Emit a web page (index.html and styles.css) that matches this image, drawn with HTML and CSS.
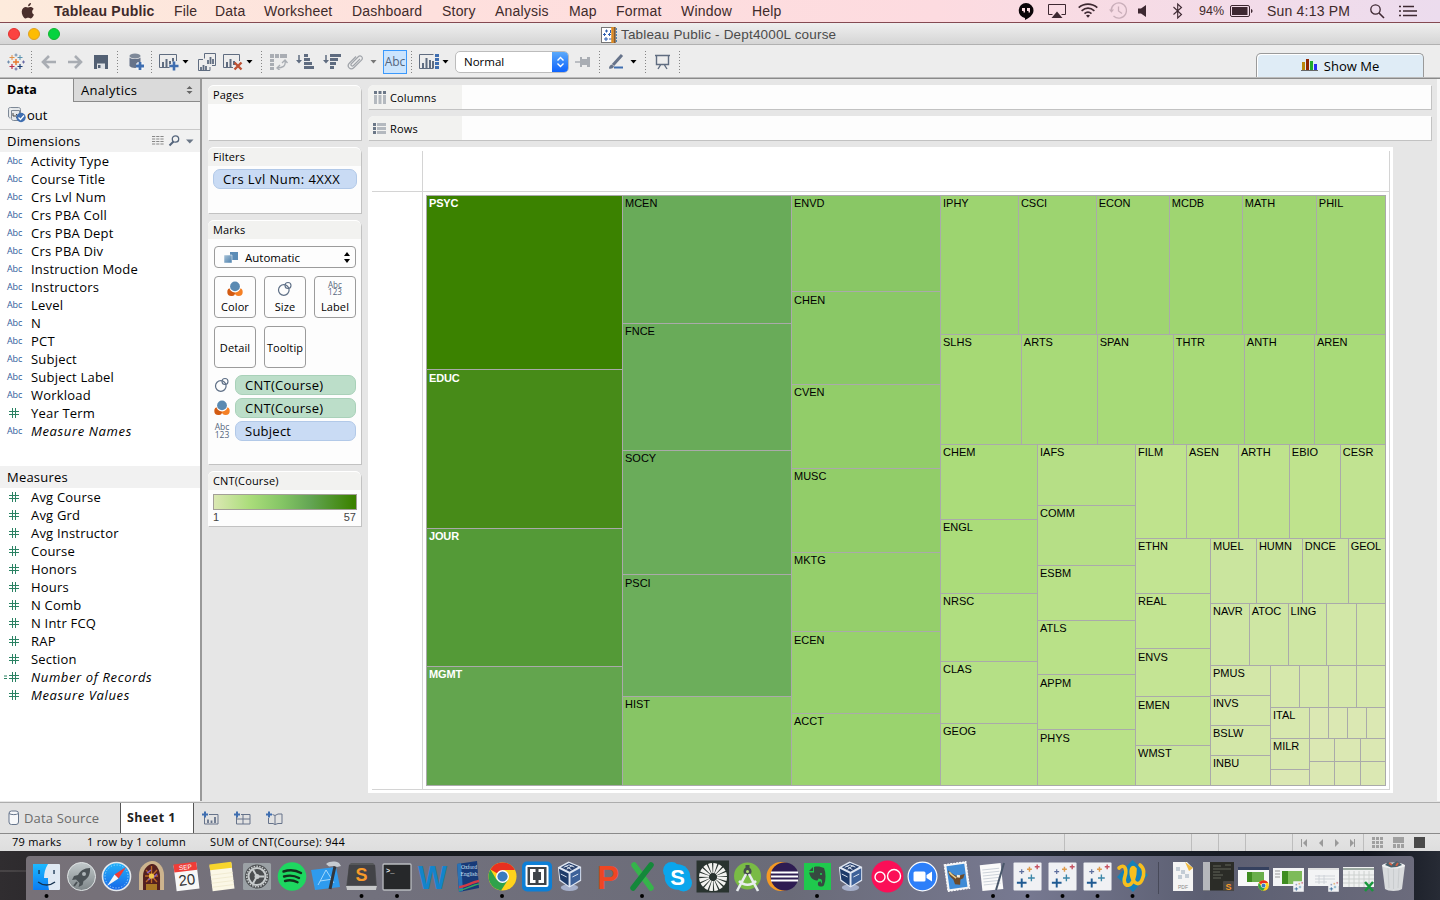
FILE: index.html
```html
<!DOCTYPE html>
<html lang="en">
<head>
<meta charset="utf-8">
<title>Tableau Public - Dept4000L course</title>
<link rel="stylesheet" href="styles.css">
</head>
<body>
<svg class="defs" width="0" height="0" aria-hidden="true">
  <defs>
    <linearGradient id="gBlue" x1="0" y1="0" x2="0" y2="1"><stop offset="0" stop-color="#23b3fa"/><stop offset="1" stop-color="#1765e8"/></linearGradient>
    <linearGradient id="gFinder" x1="0" y1="0" x2="0" y2="1"><stop offset="0" stop-color="#1cb9ff"/><stop offset="1" stop-color="#0a7cf2"/></linearGradient>
    <linearGradient id="gSilver" x1="0" y1="0" x2="0" y2="1"><stop offset="0" stop-color="#c3cacc"/><stop offset="1" stop-color="#7d8588"/></linearGradient>
    <linearGradient id="gTile" x1="0" y1="0" x2="1" y2="1"><stop offset="0" stop-color="#a9c3d8"/><stop offset="1" stop-color="#4a7fac"/></linearGradient>
    <symbol id="abc123" viewBox="0 0 16 18"><text x="8" y="8" class="abc-t" text-anchor="middle">Abc</text><text x="8" y="16" class="abc-t" text-anchor="middle">123</text></symbol>
    <symbol id="color" viewBox="0 0 16 16"><path d="M1 8.500c-.8 5 3.500 7 6.800 5.500C5 13.500 3 11.500 3 8.500z" fill="#cf560f"/><circle cx="4.300" cy="11" r="4" fill="#d35b12"/><circle cx="11.700" cy="11" r="4" fill="#f58025"/><circle cx="8" cy="5.600" r="5.800" fill="#fff"/><circle cx="8" cy="5.400" r="4.900" fill="#5a8ab2"/></symbol>
    <symbol id="size" viewBox="0 0 16 16"><circle cx="6.800" cy="9" r="5.300" fill="none" stroke="#5e6f86" stroke-width="1.200"/><circle cx="11" cy="4.500" r="3" fill="none" stroke="#5e6f86" stroke-width="1.100"/></symbol>
    <symbol id="hash" viewBox="0 0 12 12"><path d="M4.500 1v10M7.500 1v10M1 4.500h10M1 7.500h10" stroke="#2a8263" stroke-width="1" fill="none"/></symbol>
    <symbol id="caret" viewBox="0 0 7 4"><path d="M.5 0h6L3.500 3.500z"/></symbol>
    <symbol id="chrome" viewBox="0 0 30 30"><circle cx="15" cy="15" r="14.500" fill="#ffd21c"/><path d="M15 15L2.500 7.700A14.500 14.500 0 0 1 27.800 8.300L15 8.300z" fill="#e8301f"/><path d="M2.500 7.700A14.500 14.500 0 0 0 13.500 29.400L20.500 18.500 15 15 8.700 18z" fill="#2fa24b"/><circle cx="15" cy="15" r="6.700" fill="#fff"/><circle cx="15" cy="15" r="5.300" fill="#3b7bc0"/></symbol>
    <symbol id="vbox" viewBox="0 0 30 32"><ellipse cx="15" cy="28" rx="9" ry="3.500" fill="#a6b0ca"/><path d="M3 7L14 1l13 5.500v14.500L15 28 4.500 21z" fill="#dfe6f2"/><path d="M4 8.500l10 5v12.500L5.500 20z" fill="#1d3a69"/><path d="M16 13.500L26 8v12L16 26z" fill="#3d6199"/><path d="M6 7l8.500-4.500L24 6.500 15 11.500z" fill="#28406c"/><path d="M9 7l5.500-2.500L20 6.800M12 9l6-4M11 5.500l6 4M6 14l6 3M18 17l6-3" stroke="#dfe6f2" fill="none"/></symbol>
    <symbol id="tabl" viewBox="0 0 30 30"><rect x=".5" y=".5" width="29" height="29" rx="1" fill="#f0f1f4"/><path d="M4 21.500h10M9 17v9.500" stroke="#1f5a92" stroke-width="2"/><path d="M15.500 16.500h7M19 13v7" stroke="#3b87a8" stroke-width="1.400"/><path d="M6.500 10h5M9 7.500v5" stroke="#5c6d9c" stroke-width="1.200"/><path d="M14.500 7.500h5M17 5v5" stroke="#df9b4c" stroke-width="1.500"/><path d="M22.500 5h5M25 2.500v5" stroke="#c65464" stroke-width="1.500"/></symbol>
  </defs>
</svg>

<header class="menubar">
  <svg width="14" height="22"><path d="M9.200 3.200c.7-.8.800-1.600.8-2.200-1.600.1-3.100 1.500-2.900 3.200.9 0 1.600-.4 2.100-1zM7 5.600C5.500 5 3.800 4.800 2.300 6 .300 7.600.4 11 1.600 13.500c.7 1.500 1.700 2.900 3 2.900.9 0 1.300-.6 2.500-.6s1.600.6 2.600.6c1.500 0 2.700-2 3.300-3.800-2.300-1.200-2.400-4.400-.3-5.700C11.400 5 9.400 4.700 8.200 5.300z" transform="translate(0 2)" fill="#4a2f2c"/></svg>
  <b>Tableau Public</b><span>File</span><span>Data</span><span>Worksheet</span><span>Dashboard</span><span>Story</span><span>Analysis</span><span>Map</span><span>Format</span><span>Window</span><span>Help</span>
  <svg width="16" height="22"><path d="M8 3a7.500 7.500 0 0 0-1 14.900V20c3.500-1.500 8.500-5 8.500-9.500A7.500 7.500 0 0 0 8 3z" fill="#0b0508"/><path d="M4 8h3v4.500H5.500V11H4zM9 8h3v4.500h-1.500V11H9z" fill="#fbdbe0"/></svg>
  <svg width="18" height="22"><path d="M4.500 14.500h-4V4.500h17v10h-4" fill="none" stroke="#3d2831"/><path d="M9 11.500l5.500 6.500h-11z" fill="#3d2831"/></svg>
  <svg width="20" height="22"><g fill="none" stroke="#3d2831" stroke-width="1.700"><path d="M.700 7.600c5.500-4.700 13-4.700 18.600 0M3.600 10.800c4-3.400 8.800-3.400 12.800 0M6.500 13.600c2.200-1.900 4.800-1.900 7 0"/></g><path d="M8 15.500c1.300-.9 2.700-.9 4 0l-2 2.300z" fill="#3d2831"/></svg>
  <svg width="18" height="22"><g fill="none" stroke="#c9aeb9" stroke-width="1.300"><path d="M2.200 10.500a7.600 7.600 0 1 1 2.300 5.500M9.500 6.500v4.500l3.500 2.500"/></g><path d="M0 9.500h5l-2.500 3.200z" fill="#c9aeb9"/></svg>
  <svg width="10" height="22"><path d="M0 8.500h3L8 5v12l-5-3.500H0z" fill="#3d2831"/></svg>
  <svg width="10" height="22"><path d="M.5 7l8 7.500L4.700 18V4l3.800 3.500-8 7" fill="none" stroke="#3d2831" stroke-width="1.100"/></svg>
  <span class="pct">94%</span>
  <svg width="23" height="22"><rect x=".5" y="5.500" width="19" height="11" rx="1.500" fill="none" stroke="#3d2831"/><path d="M2 7h15.500v8H2z" fill="#3d2831"/><path d="M21 9c2 .5 2 3.500 0 4z" fill="#3d2831"/></svg>
  <span class="clock">Sun 4:13 PM</span>
  <svg width="15" height="22"><circle cx="5.500" cy="9.500" r="4.700" fill="none" stroke="#3d2831" stroke-width="1.300"/><path d="M9 13l5 5" stroke="#3d2831" stroke-width="1.600"/></svg>
  <svg width="18" height="22"><path d="M0 6.500h2M0 11h2M0 15.500h2M4 6.500h11M4 11h14M4 15.500h14" stroke="#3d2831" stroke-width="1.600"/></svg>
</header>

<div class="titlebar">
  <div class="lights"><i class="red"></i><i class="yellow"></i><i class="green"></i></div>
  <div class="title"><svg width="16" height="16"><rect x=".5" y=".5" width="11" height="15" fill="#fff" stroke="#777"/><path d="M4 4h3M5.500 2.500v3M2 7.500h3M3.500 6v3M7 7.500h3M8.500 6v3M3 12h4M5 10v4M8 12h3M9.500 3v3" stroke="#2f5fb0"/><path d="M11.500 0v16" stroke="#e08a1c" stroke-width="2.500"/><path d="M13.700 0v16" stroke="#8a5a2a" stroke-width="2"/><path d="M15.300 1v15" stroke="#2f6fa8" stroke-dasharray="2 1"/></svg><span>Tableau Public - Dept4000L course</span></div>
</div>

<div class="toolbar">
  <svg width="18" height="18"><path d="M6 9h6M9 6v6" stroke="#e8762b" stroke-width="1.400"/><path d="M2.500 4.500h5M5 2v5" stroke="#e09049"/><path d="M10.500 4.500h5M13 2v5" stroke="#5a93b0"/><path d="M2.500 13.500h5M5 11v5" stroke="#bf2f4b" stroke-width="1.200"/><path d="M10.500 13.500h5M13 11v5" stroke="#1f3f75" stroke-width="1.200"/><path d="M7.500 2h3M9 .5v3M0 9h3M1.500 7.500v3" stroke="#6f8cad"/><path d="M15 9h3M16.500 7.500v3M7.500 16h3M9 14.500v3" stroke="#6a6aa5"/></svg>
  <i class="sep"></i>
  <svg width="16" height="16"><path d="M15 8H2M8 2L2 8l6 6" fill="none" stroke="#a9adb3" stroke-width="2.600"/></svg>
  <svg width="16" height="16"><path d="M1 8h13M8 2l6 6-6 6" fill="none" stroke="#a9adb3" stroke-width="2.600"/></svg>
  <svg width="14" height="14"><path d="M0 0h14v14H0z" fill="#536073"/><path d="M3 8.500h8V14H3z" fill="#dfe2e6"/><path d="M4 10h2.500v3H4z" fill="#536073"/></svg>
  <i class="sep"></i>
  <svg width="15" height="18"><ellipse cx="6" cy="3" rx="5.500" ry="2.500" fill="#7e8999"/><path d="M.5 4.500c2 2 9 2 11 0V13c-2 2.500-9 2.500-11 0z" fill="#66738a"/><path d="M7 13h8M11 9v8" stroke="#fff" stroke-width="5"/><path d="M7 13h8M11 9v8" stroke="#3f6eb0" stroke-width="2.800"/></svg>
  <i class="sep"></i>
  <svg width="21" height="18"><path d="M17.500 8V1.500H.5v13H12" fill="none" stroke="#5f6c80"/><path d="M4 14V9M7.500 14V6M11 14V8M14 10V5" stroke="#5f6c80" stroke-width="2"/><path d="M10.500 13h9M15 8.500v9" stroke="#ededed" stroke-width="4"/><path d="M10.500 13h9M15 8.500v9" stroke="#3f6eb0" stroke-width="2.600"/></svg>
  <svg class="caret" width="7" height="4"><use href="#caret"/></svg>
  <svg width="18" height="18"><path d="M6.500.5h11v12H14M6.500.5v5" fill="none" stroke="#5f6c80"/><path d="M10 11V7M12.500 11V4M15 11V6M3 17v-3M5.500 17v-5M8 17v-4" stroke="#5f6c80" stroke-width="1.800"/><path d="M5 6.500H.5v11h11.500V14" fill="none" stroke="#5f6c80"/></svg>
  <svg width="20" height="18"><path d="M16.500 8V1.500H.5v13H10" fill="none" stroke="#5f6c80"/><path d="M4 14V9M7.500 14V6M11 12V8" stroke="#5f6c80" stroke-width="2"/><path d="M11.500 9.500l7 7M18.500 9.500l-7 7" stroke="#bd5134" stroke-width="2.400"/></svg>
  <svg class="caret" width="7" height="4"><use href="#caret"/></svg>
  <i class="sep"></i>
  <svg width="18" height="16"><g fill="#a9adb3"><path d="M0 0h4v4H0zM5 0h4v4H5zM10 0h7v4h-7zM0 5h4v3H0zM0 9h4v3H0zM0 13h4v3H0z"/></g><path d="M7 14c6 0 9-2 8-7M10 11l-3 3 3 2.500M12 9l3-3 2.500 3" fill="none" stroke="#a9adb3" stroke-width="1.300"/></svg>
  <svg width="19" height="16"><path d="M3 1v7" stroke="#5f6c80" stroke-width="1.500"/><path d="M0 6h6L3 9.500z" fill="#5f6c80"/><path d="M8 0h4v3H8zM8 4h6v3H8zM8 8h8v3H8zM8 12h10v3H8z" fill="#5f6c80"/></svg>
  <svg width="19" height="16"><path d="M3 1v7" stroke="#5f6c80" stroke-width="1.500"/><path d="M0 6h6L3 9.500z" fill="#5f6c80"/><path d="M7 0h11v3H7zM7 4h8v3H7zM7 8h6v3H7zM7 12h4v3H7z" fill="#5f6c80"/></svg>
  <svg width="17" height="16"><path d="M13 5L6.500 11.500c-1.500 1.500-3.500-.5-2-2L11 3c2.500-2.500 6 .5 3.500 3.200L7 13.500c-3.500 3.500-8-1-4.500-4.500L9 2.500" fill="none" stroke="#a0a4aa" stroke-width="1.200"/></svg>
  <svg class="caret dim" width="7" height="4"><use href="#caret"/></svg>
  <span class="abc-btn">Abc</span>
  <i class="sep"></i>
  <svg width="21" height="15"><path d="M14.500 14.500H.5V.5h14" fill="none" stroke="#5f6c80"/><path d="M4 14V9M7.500 14V4M11 14V6M14 14V7" stroke="#5f6c80" stroke-width="2"/><path d="M16 0h4v3h-4zM16 4h4v3h-4zM16 8h4v3h-4zM16 12h4v3h-4z" fill="#3f6eb0"/></svg>
  <svg class="caret" width="7" height="4"><use href="#caret"/></svg>
  <div class="select"><span>Normal</span><i><svg width="9" height="12"><path d="M1.500 4.500l3-3 3 3M1.500 7.500l3 3 3-3" fill="none" stroke="#fff" stroke-width="1.400"/></svg></i></div>
  <svg width="16" height="12"><path d="M0 6h6" stroke="#a9adb3" stroke-width="1.500"/><path d="M5 1h2v2h5V1h3v10h-3V9H7v2H5z" fill="#a9adb3"/></svg>
  <i class="sep"></i>
  <svg width="16" height="16"><path d="M13 1L4 11" stroke="#66738a" stroke-width="3"/><path d="M0 14.500c0-2 1-3.500 3-4l2 2c-1 2-3 2.500-5 2z" fill="#66738a"/><path d="M5 13.500h9" stroke="#3f6eb0" stroke-width="2"/></svg>
  <svg class="caret" width="7" height="4"><use href="#caret"/></svg>
  <i class="sep"></i>
  <svg width="16" height="16"><path d="M0 1.500h15M1.500 2v8.500h12V2M5.500 11L3 15M9.500 11l2.500 4" fill="none" stroke="#5f6c80" stroke-width="1.400"/></svg>
  <i class="sep"></i>
  <div class="showme"><svg width="17" height="13"><path d="M1 3h3v8H1z" fill="#b8860b"/><path d="M5 0h3v11H5z" fill="#8f2500"/><path d="M9 2h3v9H9z" fill="#1fa82c"/><path d="M13 5h3v6h-3z" fill="#2a2af0"/><path d="M0 11.500h17" stroke="#666"/></svg><span>Show Me</span></div>
</div>

<main class="main">
  <aside class="side">
    <div class="tabs"><b>Data</b><span>Analytics<svg width="7" height="8"><path d="M3.500 0L6.500 3h-6zM3.500 8L6.500 5h-6z" fill="#666"/></svg></span></div>
    <div class="source"><svg width="18" height="16"><path d="M2.500.5h8c2 0 2 2 2 2v8M2.500.5c-2 0-2 1-2 2V9c0 2 2 2 2 2M3.500 3.500h8v10h-6c-2 0-2-2-2-2z" fill="#e4e7ea" stroke="#7d8896"/><path d="M5 6v3h5M8 7l2 2-2 2" fill="none" stroke="#444"/><circle cx="13" cy="10.500" r="4.700" fill="#3f6eb0"/><path d="M10.500 10.500l2 2 3.500-4" fill="none" stroke="#fff" stroke-width="1.300"/></svg><span>out</span></div>
    <div class="head"><span>Dimensions</span><svg width="42" height="12"><path d="M0 1.500h12M0 4h12M0 6.500h12M0 9h12" stroke="#888" stroke-dasharray="3.200 1"/><circle cx="23.500" cy="4" r="3.200" fill="none" stroke="#55657c" stroke-width="1.300"/><path d="M21.500 6.500L17.500 10.500" stroke="#55657c" stroke-width="1.900"/><path d="M34 4.500h7.500L37.800 8.500z" fill="#6b7787"/></svg></div>
    <ul class="fields dims">
      <li><i>Abc</i>Activity Type</li><li><i>Abc</i>Course Title</li><li><i>Abc</i>Crs Lvl Num</li><li><i>Abc</i>Crs PBA Coll</li><li><i>Abc</i>Crs PBA Dept</li><li><i>Abc</i>Crs PBA Div</li><li><i>Abc</i>Instruction Mode</li><li><i>Abc</i>Instructors</li><li><i>Abc</i>Level</li><li><i>Abc</i>N</li><li><i>Abc</i>PCT</li><li><i>Abc</i>Subject</li><li><i>Abc</i>Subject Label</li><li><i>Abc</i>Workload</li>
      <li><svg width="12" height="12"><use href="#hash"/></svg>Year Term</li><li class="it"><i>Abc</i>Measure Names</li>
    </ul>
    <div class="head"><span>Measures</span></div>
    <ul class="fields">
      <li><svg width="12" height="12"><use href="#hash"/></svg>Avg Course</li><li><svg width="12" height="12"><use href="#hash"/></svg>Avg Grd</li><li><svg width="12" height="12"><use href="#hash"/></svg>Avg Instructor</li><li><svg width="12" height="12"><use href="#hash"/></svg>Course</li><li><svg width="12" height="12"><use href="#hash"/></svg>Honors</li><li><svg width="12" height="12"><use href="#hash"/></svg>Hours</li><li><svg width="12" height="12"><use href="#hash"/></svg>N Comb</li><li><svg width="12" height="12"><use href="#hash"/></svg>N Intr FCQ</li><li><svg width="12" height="12"><use href="#hash"/></svg>RAP</li><li><svg width="12" height="12"><use href="#hash"/></svg>Section</li>
      <li class="it calc"><svg width="16" height="12"><path d="M0 5h3M0 7.500h3" stroke="#2a8263"/><use href="#hash" x="4" width="12" height="12"/></svg>Number of Records</li><li class="it"><svg width="12" height="12"><use href="#hash"/></svg>Measure Values</li>
    </ul>
  </aside>

  <section class="cards">
    <div class="card pages"><h3>Pages</h3></div>
    <div class="card filters"><h3>Filters</h3><div class="pill blue">Crs Lvl Num: 4XXX</div></div>
    <div class="card marks"><h3>Marks</h3>
      <div class="marktype"><svg width="14" height="11"><path d="M6 0h8v8H6z" fill="#5c8cb6"/><path d="M0 3h8v8H0z" fill="url(#gTile)" stroke="#fff" stroke-width=".5"/></svg><span>Automatic</span><svg width="6" height="11"><path d="M3 0l3 4H0zM3 11l3-4H0z"/></svg></div>
      <div class="btns">
        <div><svg width="16" height="16"><use href="#color"/></svg>Color</div><div><svg width="16" height="16"><use href="#size"/></svg>Size</div><div><svg width="18" height="17"><use href="#abc123"/></svg>Label</div><div>Detail</div><div>Tooltip</div>
      </div>
      <div class="shelfrow"><svg width="16" height="16"><use href="#size"/></svg><div class="pill green">CNT(Course)</div></div>
      <div class="shelfrow"><svg width="16" height="16"><use href="#color"/></svg><div class="pill green">CNT(Course)</div></div>
      <div class="shelfrow"><svg width="16" height="18"><use href="#abc123"/></svg><div class="pill blue">Subject</div></div>
    </div>
    <div class="card legend"><h3>CNT(Course)</h3><div class="ramp"></div><div class="ends"><span>1</span><span>57</span></div></div>
  </section>

  <section class="canvas">
    <div class="shelf"><div><svg width="12" height="13"><g fill="#6b7787"><path d="M0 0h3v3H0zM4.500 0h3v3h-3zM9 0h3v3H9z"/></g><g fill="#b4b9bf"><path d="M0 4h3v9H0zM4.500 4h3v9h-3zM9 4h3v9H9z"/></g></svg>Columns</div></div>
    <div class="shelf rows"><div><svg width="13" height="11"><g fill="#6b7787"><path d="M0 0h3v3H0zM0 4h3v3H0zM0 8h3v3H0z"/></g><g fill="#b4b9bf"><path d="M4 0h9v3H4zM4 4h9v3H4zM4 8h9v3H4z"/></g></svg>Rows</div></div>
    <div class="view"><div class="grid"><div class="corner"></div><div class="top"></div><div class="rowhead"></div><div class="pane"><div class="treemap" id="treemap"></div></div></div></div>
  </section>
</main>

<nav class="sheets">
  <div class="ds"><svg width="12" height="16"><rect x="1" y="1" width="9.500" height="13.500" rx="2.500" fill="#f7f8fa" stroke="#66758c"/><path d="M1 3.500c2 1.500 7.500 1.500 9.500 0" fill="none" stroke="#66758c"/></svg>Data Source</div>
  <div class="sheet">Sheet 1</div>
  <svg width="17" height="14"><path d="M7 3.500h9v9.500H2.500V6" fill="none" stroke="#66738a"/><path d="M6 12V8.500M9.500 12V9.500M13 12V6" stroke="#66738a" stroke-width="1.800"/><path d="M0 3.500h6M3 .5v6" stroke="#3f6eb0" stroke-width="2"/></svg>
  <svg width="17" height="14"><path d="M7 3.500h9v9.500H2.500V6M2.500 8h13.500M9 3.500v9.500" fill="none" stroke="#66738a"/><path d="M0 3.500h6M3 .5v6" stroke="#3f6eb0" stroke-width="2"/></svg>
  <svg width="17" height="14"><path d="M9 4.500l3-1.500h4v9.500h-4l-3 1zM9 13.500l-2-1H2.500V7M6.500 3.500l2.500 1" fill="none" stroke="#66738a"/><path d="M0 3.500h6M3 .5v6" stroke="#3f6eb0" stroke-width="2"/></svg>
</nav>
<footer class="status">
  <span>79 marks</span><span>1 row by 1 column</span><span>SUM of CNT(Course): 944</span>
  <i></i><i></i><i></i><i></i>
  <div class="nav"><svg width="55" height="10"><g fill="#9a9a9a"><path d="M0 1h1v8H0zM6 1v8L2 5zM22 1v8l-4-4zM34 1v8l4-4zM49 1v8l4-4zM53 1h1v8h-1z"/></g></svg></div>
  <div class="modes"><svg width="54" height="12"><g fill="#a0a0a0"><path d="M0 0h3v3H0zM4 0h3v3H4zM8 0h3v3H8zM0 4h3v3H0zM4 4h3v3H4zM8 4h3v3H8zM0 8h3v3H0zM4 8h3v3H4zM8 8h3v3H8zM21 0h11v6H21zM21 7h3v4h-3zM25 7h3v4h-3zM29 7h3v4h-3z"/></g><path d="M42 0h11v11H42z" fill="#4a4a4a"/></svg></div>
</footer>

<div class="desk"><div class="dock">
  <svg viewBox="0 0 35 44"><rect x="4" y="8" width="27" height="26" rx="1" fill="#dfe9f3"/><path d="M4 8h15c-3 5-4 9-4 14h4c0 4 0 8 1 12H4z" fill="url(#gFinder)"/><path d="M10 14v4M25 14v4M9 26c5 4 12 4 17 0" stroke="#14324f" stroke-width="1.300" fill="none"/><circle cx="17.500" cy="40" r="2"/></svg>
  <svg viewBox="0 0 35 44"><circle cx="17.500" cy="20.500" r="14" fill="url(#gSilver)" stroke="#dfe3e4"/><path d="M26 12c-6 0-10 3-12 7l-4 1-2 4 4-.5 3.500 3.500-1 4 4-2 1-4c4-2 7-6 6.500-13z" fill="#4b5256"/><circle cx="20" cy="18" r="2" fill="#aeb5b8"/><path d="M10 30l3-4" stroke="#4b5256" stroke-width="2"/></svg>
  <svg viewBox="0 0 35 44"><circle cx="17.500" cy="20.500" r="14" fill="url(#gBlue)" stroke="#e4e8ec" stroke-width="1.600"/><circle cx="17.500" cy="20.500" r="11.500" fill="none" stroke="#b9e2fb" stroke-dasharray="1 2"/><path d="M27 11L15.500 18.500l4 4z" fill="#f23c36"/><path d="M8 30l7.500-11.500 4 4z" fill="#f5f5f5"/></svg>
  <svg viewBox="0 0 35 44"><path d="M5 34V19C5 11 11 6 17.500 5S30 11 30 19v15z" fill="#cdb48e"/><path d="M9 34V20c0-6 4-11 8.500-12S26 14 26 20v14z" fill="#54201f"/><path d="M17.500 10v17M12 14l11 12M23 14L12 26M11 20h13" stroke="#c06a26" stroke-width="1.300"/><path d="M13 17l4-3M19 22l4-4M14 24l3-2" stroke="#8a5fc0" stroke-width="1.500"/><circle cx="17.500" cy="20" r="2.600" fill="#f0c64b"/><path d="M12 28h11v6H12z" fill="#a97825"/></svg>
  <svg viewBox="0 0 35 44"><g transform="rotate(-7 17.500 21)"><path d="M6 8h23v26H6z" fill="#f7f7f7"/><path d="M6 7h23v8H6z" fill="#ef3d38"/><text x="17.500" y="13.500" text-anchor="middle" class="cal-m">SEP</text><text x="17.500" y="29" text-anchor="middle" class="cal-d">20</text></g></svg>
  <svg viewBox="0 0 35 44"><g transform="rotate(-7 17.500 21)"><path d="M7 8h22v26H7z" fill="#fbf7e6"/><path d="M7 7h22v6H7z" fill="#f7d52c"/><path d="M7 18h22M7 22h22M7 26h22M7 30h22" stroke="#f1ebd2"/></g></svg>
  <svg viewBox="0 0 35 44"><rect x="4" y="7" width="28" height="27" rx="1.500" fill="#9ba1a5"/><circle cx="18" cy="20.500" r="12" fill="#4b4e50"/><circle cx="18" cy="20.500" r="8.500" fill="none" stroke="#c8cccd" stroke-width="2"/><circle cx="18" cy="20.500" r="10.300" fill="none" stroke="#c8cccd" stroke-width="1.500" stroke-dasharray="1.500 1.300"/><path d="M18 20.500h7.500M18 20.500l-4 6.700M18 20.500l-4-6.700" stroke="#c8cccd" stroke-width="2"/><circle cx="18" cy="20.500" r="2.500" fill="#c8cccd"/></svg>
  <svg viewBox="0 0 35 44"><circle cx="18" cy="20.500" r="14.300" fill="#1ed760"/><path d="M9.500 15.500c6-2 12.500-1.400 17.500 1.500M10 20.500c5-1.500 10.500-1 15 1.500M11 25c4-1.200 8.500-.8 12.500 1.300" fill="none" stroke="#12301c" stroke-width="2.400" stroke-linecap="round"/></svg>
  <svg viewBox="0 0 35 44"><path d="M2 14l25-3 4 20-25 3z" fill="#2e9bee"/><path d="M9 29l8-15 8 13M11 25l13-2" fill="none" stroke="#a4d8fb"/><path d="M26 10l-5 23" stroke="#32363b" stroke-width="3"/><path d="M17 8c4-3 9-3 13-1l2 3-4 1-3-1-5 .5z" fill="#c7ccd1"/></svg>
  <svg viewBox="0 0 35 44"><path d="M5 9l2-2h22l2 2 2 22-1 3H3l-1-3z" fill="#55575a"/><path d="M5 9h26l1 20H3z" fill="#424347"/><path d="M2 30h31l-1 4H3z" fill="#c7c9ca"/><text x="17.500" y="25" text-anchor="middle" class="subl">S</text><circle cx="17.500" cy="40" r="2"/></svg>
  <svg viewBox="0 0 35 44"><rect x="4" y="8" width="28" height="26" rx="1" fill="#26282a" stroke="#b9bcc0" stroke-width="1.300"/><text x="7" y="17" class="term">&gt;_</text><circle cx="18" cy="40" r="2"/></svg>
  <svg viewBox="0 0 35 44"><text x="17.500" y="33" text-anchor="middle" class="office w" textLength="29" lengthAdjust="spacingAndGlyphs">W</text></svg>
  <svg viewBox="0 0 35 44"><path d="M7 8l20-3 2 27-20 4z" fill="#173a78"/><path d="M7 8l4-1 2 28-4 1z" fill="#2b73b5"/><path d="M9 31c6 0 13-5 20-6" stroke="#d33b45" stroke-width="2.500" fill="none"/><path d="M9 34c6 0 13-5 20-6" stroke="#35a760" stroke-width="1.500" fill="none"/><text x="19" y="13" text-anchor="middle" class="dict">Oxford</text><text x="19" y="20" text-anchor="middle" class="dict">English</text></svg>
  <svg viewBox="0 0 35 44"><use href="#chrome" x="3" y="6" width="29" height="29"/><circle cx="17" cy="40" r="2"/></svg>
  <svg viewBox="0 0 35 44"><rect x="2" y="5.500" width="30" height="30" rx="5" fill="#0d7fd6"/><rect x="5.500" y="9" width="23" height="22" rx="2" fill="#fff"/><path d="M7.500 11h19v18h-19z" fill="#3e4348"/><path d="M15.500 14.500h-4v11h4M18.500 14.500h4v11h-4" fill="none" stroke="#fff" stroke-width="3"/></svg>
  <svg viewBox="0 0 35 44"><use href="#vbox" x="0" y="4" width="29" height="32"/></svg>
  <svg viewBox="0 0 35 44"><text x="18" y="33" text-anchor="middle" class="office p">P</text></svg>
  <svg viewBox="0 0 35 44"><path d="M9 9l17 23" stroke="#36b44b" stroke-width="5.500" stroke-linecap="round"/><path d="M26 9L8 32" stroke="#14883a" stroke-width="5.500" stroke-linecap="round"/><circle cx="17" cy="40" r="2"/></svg>
  <svg viewBox="0 0 35 44"><circle cx="17.500" cy="21" r="12.800" fill="#0aa6ec"/><circle cx="11.500" cy="14.500" r="8.500" fill="#0aa6ec"/><circle cx="23.500" cy="27" r="8.500" fill="#0aa6ec"/><text x="17.500" y="28.500" text-anchor="middle" class="skype">S</text></svg>
  <svg viewBox="0 0 35 44"><path d="M1.500 4.500h32.500v32H1.500z" fill="#29332f"/><circle cx="18" cy="21" r="9" fill="none" stroke="#f3f3f0" stroke-width="10" stroke-dasharray="2.600 .93"/><circle cx="18" cy="21" r="3.300" fill="#29332f"/></svg>
  <svg viewBox="0 0 35 44"><circle cx="17.500" cy="20" r="13.500" fill="#79bb45"/><path d="M17.500 9v6" stroke="#454d4d" stroke-width="4"/><circle cx="17.500" cy="15.500" r="4" fill="#454d4d"/><circle cx="17.500" cy="15.500" r="1.500" fill="#aee071"/><path d="M16 18L7 35M19 18l9 17M9 25c5 5 12 5 17 0" fill="none" stroke="#e8edef" stroke-width="2.600"/></svg>
  <svg viewBox="0 0 35 44"><circle cx="16" cy="20.500" r="14.500" fill="#f59a23"/><circle cx="19.500" cy="20.500" r="14" fill="#2e1c52"/><path d="M6 16.500h27M6 20.500h27M6 24.500h27" stroke="#fff" stroke-width="1.800"/></svg>
  <svg viewBox="0 0 35 44"><path d="M4 7h27v27H4z" fill="#1fc94d"/><path d="M9 15l4-4v4zM14 11c4-1 7 0 10 1 2 5 2 12 0 17-1 2-5 2-6 0-.5-2 0-4 3-3.500v2c1.500 0 1.500-4-.5-4.500l-2-.5-1 2c-4 0-7-2-8.500-8h5z" fill="#364a40"/><circle cx="21" cy="18" r="1.100" fill="#1fc94d"/><circle cx="17" cy="40" r="2"/></svg>
  <svg viewBox="0 0 35 44"><use href="#vbox" x="1" y="4" width="29" height="32"/></svg>
  <svg viewBox="0 0 35 44"><circle cx="17.500" cy="20.500" r="16" fill="#fb0f57"/><circle cx="10" cy="21" r="5" fill="none" stroke="#fff" stroke-width="1.400"/><circle cx="24" cy="20" r="6.500" fill="none" stroke="#fff" stroke-width="1.400"/></svg>
  <svg viewBox="0 0 35 44"><circle cx="17.500" cy="20.500" r="15" fill="#fff"/><circle cx="17.500" cy="20.500" r="13.800" fill="#2d7ff9"/><rect x="8.500" y="15.500" width="12" height="10" rx="1.500" fill="#fff"/><path d="M21.500 19l5.500-3.500v10L21.500 22z" fill="#fff"/></svg>
  <svg viewBox="0 0 35 44"><g transform="rotate(-8 17 21)"><path d="M6 7h22v27H6z" fill="#f4f4f4" stroke="#fff" stroke-dasharray="2 1"/><path d="M8 9h18v23H8z" fill="#3f8bd6"/><path d="M9 13c2 3 5 5 8 7l8-1-2 4-3 1-1 5-5-1-1-5c-3-3-4-6-4-10z" fill="#6d4a28"/><path d="M17 20l3 1" stroke="#f3ecd9" stroke-width="2.500"/><path d="M10 15c2 4 4 5 6 7" stroke="#e7cf8e" stroke-width="1.500" fill="none"/></g></svg>
  <svg viewBox="0 0 35 44"><g transform="rotate(-6 17 21)"><path d="M6 8h21v26H6z" fill="#fafafa"/><path d="M8 13h17M8 16h17M8 19h17M8 22h17M8 25h17M8 28h17" stroke="#cdd3da"/></g><path d="M29 7l-8 27" stroke="#49576a" stroke-width="2"/><circle cx="18" cy="40" r="2"/></svg>
  <svg viewBox="0 0 35 44"><use href="#tabl" x="3" y="6" width="29" height="29"/><circle cx="17.500" cy="40" r="2"/></svg>
  <svg viewBox="0 0 35 44"><use href="#tabl" x="3" y="6" width="29" height="29"/><circle cx="17.500" cy="40" r="2"/></svg>
  <svg viewBox="0 0 35 44"><use href="#tabl" x="3" y="6" width="29" height="29"/><circle cx="17.500" cy="40" r="2"/></svg>
  <svg viewBox="0 0 35 44"><path d="M17.500 4L33 19 18 36 2 21z" fill="#1581b8"/><path d="M4 12c6-5 8 2 6 8s0 10 4 9 6-9 6-16c-3-4-5 1-3 8s7 9 10 3 2-12-2-15" fill="none" stroke="#f7bf1d" stroke-width="3.600" stroke-linecap="round"/><circle cx="17.500" cy="40" r="2"/></svg>
  <i class="dsep"></i>
  <svg viewBox="0 0 35 44"><path d="M7 6h14l6 6v23H7z" fill="#f4f4f4"/><path d="M19 6l8 6-4 3z" fill="#efb93f"/><path d="M10 11h4v4h-4zM15 14h4v4h-4zM12 19h4v4h-4zM19 18h4v4h-4z" fill="#c3ccd5"/><text x="17" y="33" text-anchor="middle" class="pdf">PDF</text></svg>
  <svg viewBox="0 0 35 44"><path d="M2 6h31v28.500H2z" fill="#2b2c27"/><path d="M2 6h7v28.500H2z" fill="#b5b7bc"/><path d="M12 10h8M12 13h12M12 16h7M12 19h10M12 22h8M24 9h6M24 13h6" stroke="#62645b"/><rect x="22" y="25" width="11" height="10" rx="1" fill="#4a4745"/><text x="27.500" y="33.500" text-anchor="middle" class="subs">S</text></svg>
  <svg viewBox="0 0 35 44"><path d="M2 11h31v19H2z" fill="#f7f8f8"/><path d="M2 11h31v3H2z" fill="#35415f"/><path d="M11 16h17v10H11z" fill="#69ae4a"/><path d="M11 16h5v10h-5z" fill="#3e8c20"/><use href="#chrome" x="22" y="24" width="11" height="11"/></svg>
  <svg viewBox="0 0 35 44"><path d="M2 12h31v18H2z" fill="#f3f4f5"/><path d="M11 15h20v13H11z" fill="#7dbb59"/><path d="M11 15h6v13h-6z" fill="#3e8c20"/><path d="M4 15h5M4 18h5M4 21h5" stroke="#999"/><use href="#tabl" x="22" y="25" width="11" height="11"/></svg>
  <svg viewBox="0 0 35 44"><path d="M2 12h31v18H2z" fill="#f3f4f5"/><path d="M9 20h20M9 23h20M9 26h12M13 19v9M18 19v9" stroke="#cfd3d8"/><path d="M2 13h31" stroke="#ccc"/><use href="#tabl" x="22" y="25" width="11" height="11"/></svg>
  <svg viewBox="0 0 35 44"><path d="M2 11h31v20H2z" fill="#f0f1f1"/><path d="M2 13h31" stroke="#9ba9a1" stroke-width="2"/><path d="M8 15v16M13 15v16M18 15v16M23 15v16M28 15v16M2 19h31M2 23h31M2 27h31" stroke="#cdd1cf"/><path d="M24 26l8 9M32 26l-8 9" stroke="#18973c" stroke-width="2.500"/></svg>
  <svg viewBox="0 0 35 44"><path d="M6 9h23l-3 24c-3 2.500-14 2.500-17 0z" fill="#d9dbdd"/><path d="M12 12l1 20M17.500 12v21M23 12l-1 20" stroke="#c9ccce"/><ellipse cx="17.500" cy="9.500" rx="11.500" ry="3" fill="#eef0f1"/><path d="M9 9l3-3 4 2 5-3 5 4-5 2-6 .5z" fill="#49606b"/><path d="M13 7l3 2M22 7l-2 3" stroke="#d15e43" stroke-width="2"/></svg>
</div></div>
<script src="treemap.js"></script>
</body>
</html>
```
FILE: styles.css
```css
* { box-sizing: border-box; }
html, body { height: 100%; }
body { margin: 0; width: 1440px; height: 900px; overflow: hidden; display: flex; flex-direction: column; font-family: "Open Sans", "Noto Sans", sans-serif; font-size: 13px; color: #000; background: #e6e6e6; }
svg { display: block; flex: none; }
.defs { position: absolute; }
i { font-style: normal; }
ul, h3 { margin: 0; padding: 0; list-style: none; font-weight: 400; }

.menubar { flex: none; height: 23px; padding-left: 21px; display: grid; align-items: center; grid-template-columns: 33px 120px 41px 49px 88px 90px 53px 74px 47px 65px 71px 266px 30px 30px 31px 29px 35px 26px 31px 37px 103px 29px 20px; font: 14px/22px "Liberation Sans", sans-serif; letter-spacing: .2px; color: #3f2a2a; background: linear-gradient(90deg, #fdebdc, #fee0dd 30%, #fddbe0 65%, #ecdcee); border-bottom: 1px solid #844a52; white-space: nowrap; }
.menubar .pct { font-size: 12.500px; letter-spacing: 0; }

.titlebar { flex: none; height: 22px; display: grid; grid-template-columns: 600px 1fr; align-items: center; background: linear-gradient(#efefef, #d5d5d5); border-bottom: 1px solid #b1b1b1; }
.lights { display: flex; gap: 8px; padding-left: 8px; }
.lights i { width: 12px; height: 12px; border-radius: 50%; border: 1px solid #e1322f; background: #fc4341; }
.lights .yellow { background: #fdbc02; border-color: #dfa023; }
.lights .green { background: #06d33f; border-color: #12b52f; }
.title { display: flex; align-items: center; gap: 4px; padding: 2px 0 0 1px; font: 13.500px "Liberation Sans", sans-serif; letter-spacing: .17px; color: #4b4b4b; }

.toolbar { flex: none; height: 34px; padding: 0 0 0 7px; display: grid; align-items: center; grid-template-columns: 24px 10px 26px 27px 23px 12px 22px 8px 22px 17px 25px 22px 16px 9px 26px 27px 24px 22px 14px 28px 8px 22px 14px 120px 24px 10px 20px 16px 10px 24px 577px 168px; background: #ededed; border-bottom: 1px solid #8a8a8a; box-shadow: inset 0 -1px #bbb; }
.sep { width: 1px; height: 22px; background: repeating-linear-gradient(#858585 0 1px, transparent 1px 3px); }
.caret { fill: #000; margin-left: 1px; }
.caret.dim { fill: #777; }
.abc-btn { width: 24px; height: 24px; border: 1px solid #3b99fc; background: #cbe4fd; color: #55657c; font-size: 12px; line-height: 22px; text-align: center; }
.select { width: 114px; height: 22px; border: 1px solid #bcbcbc; border-radius: 5px; background: #fff; display: flex; justify-content: space-between; font-size: 11.500px; line-height: 20px; overflow: hidden; padding-left: 8px; }
.select i { width: 17px; margin: -1px; height: 22px; display: grid; place-items: center; background: linear-gradient(#5fadfa, #0a60fd); }
.showme { align-self: end; height: 24px; margin-bottom: 1px; border: 1px solid #9a9a9a; border-bottom: 0; border-radius: 5px 5px 0 0; background: #dfecf6; box-shadow: inset 1px 1px #fff; display: flex; align-items: center; justify-content: center; gap: 6px; font-size: 13px; }

.main { flex: none; height: 722px; display: flex; background: #e6e6e6; border-right: 3px solid #f7f7f7; }
.side { width: 202px; flex: none; background: #fff; border-right: 2px solid #999; display: flex; flex-direction: column; }
.tabs { height: 23px; display: flex; background: #f2f2f2; line-height: 22px; font-size: 12.500px; }
.tabs b { width: 73px; padding-left: 7px; font-weight: 700; }
.tabs span { flex: 1; display: flex; justify-content: space-between; align-items: center; padding: 0 7px; border-left: 1px solid #8b8b8b; border-bottom: 1px solid #8b8b8b; background: #dadada; font-size: 13px; letter-spacing: .3px; }
.source { height: 27px; display: flex; align-items: center; gap: 1px; padding: 0 0 1px 8px; background: #f2f2f2; }
.head { height: 22px; flex: none; padding: 0 6px 0 7px; display: flex; align-items: center; justify-content: space-between; background: #f1f1f1; letter-spacing: .2px; }
.source + .head { height: 23px; border-top: 1px solid #c9c9c9; }
.fields li { height: 18px; line-height: 18px; padding-left: 7px; display: flex; align-items: center; font-size: 13px; letter-spacing: .2px; white-space: nowrap; }
.fields i { width: 24px; font-size: 9px; font-weight: 500; color: #2f5d9b; letter-spacing: -.1px; font-style: normal; }
.fields svg { margin: 0 11px 0 1px; }
.fields .calc { padding-left: 4px; }
.fields .calc svg { margin-left: 0; }
.dims { height: 314px; }
.fields .it { font-style: italic; letter-spacing: .63px; }

.cards { width: 153px; margin: 6px 7px 0 6px; flex: none; display: flex; flex-direction: column; gap: 6px; }
.card { background: #fdfdfd; border-radius: 6px 6px 0 0; box-shadow: 1px 1px #c2c2c2; }
.card h3, .shelf > div { background: #f2f2f0; font-size: 11px; letter-spacing: .15px; }
.card h3 { height: 19px; line-height: 18px; padding-left: 5px; border-radius: 6px 6px 0 0; border-top: 1px solid #fff; }
.pages { height: 55px; margin-bottom: 1px; }
.filters { height: 66px; margin-bottom: 1px; }
.marks { height: 244px; margin-bottom: 1px; }
.legend { height: 55px; }
.pill { height: 20px; border-radius: 7px; border: 1px solid #b2c9e8; background: #c9dbf4; font-size: 13px; line-height: 18px; padding-left: 9px; letter-spacing: .25px; }
.pill.green { background: #bcdec9; border-color: #a9d1b9; }
.filters .pill { margin: 3px 4px 3px 5px; letter-spacing: .45px; }
.marktype { width: 142px; height: 22px; margin: 7px 5px 0 6px; border: 1px solid #9b9b9b; border-radius: 4px; display: flex; align-items: center; font-size: 11.500px; padding: 0 5px 0 9px; }
.marktype span { flex: 1; padding-left: 7px; }
.btns { display: grid; grid-template-columns: repeat(3, 42px); gap: 8px; margin: 8px 5px 7px 6px; }
.btns div { height: 42px; border: 1px solid #9b9b9b; border-radius: 4px; display: flex; flex-direction: column; align-items: center; justify-content: center; gap: 2px; padding-top: 1px; font-size: 11px; line-height: 16px; letter-spacing: .1px; white-space: nowrap; }
.shelfrow { display: flex; align-items: center; gap: 5px; padding: 0 5px 0 6px; margin-bottom: 3px; height: 20px; }
.shelfrow .pill { flex: 1; }
.abc-t { font-size: 8.500px; fill: #55657c; }
.ramp { height: 16px; margin: 4px 4px 0 5px; border: 1px solid #a39f98; background: linear-gradient(90deg, #dbe8b3, #abdd7b 25%, #84c565 48%, #63a553 68%, #3b8200 98%); }
.ends { display: flex; justify-content: space-between; padding: 1px 5px; font: 11px "Liberation Sans", sans-serif; color: #444; }

.canvas { flex: 1; min-width: 0; padding-top: 6px; }
.shelf { width: 1063px; height: 24px; margin-bottom: 7px; background: #fdfdfd; border-radius: 6px 0 0 0; box-shadow: 1px 1px #c2c2c2; }
.shelf > div { width: 94px; height: 24px; padding-left: 6px; border-radius: 6px 0 0 0; display: flex; align-items: center; gap: 4px; }
.shelf.rows > div { padding-left: 5px; }
.view { width: 1025px; height: 646px; background: #fff; padding: 4px 3px 3px 4px; }
.grid { height: 100%; display: grid; grid-template-columns: 50px 1fr; grid-template-rows: 41px 1fr; border-right: 1px solid #d4d4d4; border-bottom: 1px solid #d4d4d4; }
.corner, .top { border-bottom: 1px solid #d4d4d4; }
.top, .pane { border-left: 1px solid #d4d4d4; }
.pane { padding: 3px; min-width: 0; min-height: 0; }
.treemap { height: 100%; display: flex; padding: 1px; background: #aaaaaa; font: 11px/13px "Liberation Sans", sans-serif; }
.split { display: flex; gap: 1px; min-width: 0; min-height: 0; flex: 1 1 0; }
.split.down { flex-direction: column; }
.cell { min-width: 0; min-height: 0; flex: 1 1 0; padding: 1px 0 0 2px; white-space: nowrap; overflow: hidden; }
.cell.low { padding-top: 2px; }
.cell.strong { color: #fff; font-weight: 700; letter-spacing: -.15px; }

.sheets { flex: none; height: 31px; display: grid; grid-template-columns: 120px 82px 32px 32px 32px; align-items: center; background: #e2e2e2; border-top: 1px solid #adadad; font-size: 13px; margin-top: 1px; }
.ds { display: flex; align-items: center; gap: 4px; padding-left: 8px; color: #6b6b6b; letter-spacing: .15px; }
.sheet { width: 74px; height: 30px; line-height: 29px; padding-left: 6px; background: #fff; border: solid #555; border-width: 0 1px; font-weight: 700; font-size: 12.500px; letter-spacing: .45px; color: #222; }
.status { flex: none; height: 18px; display: grid; grid-template-columns: 75px 123px 854px 127px 27px 27px 47px 71px 77px; padding-left: 12px; background: linear-gradient(#e4e4e4, #dedede); border-top: 1px solid #8a8a8a; font-size: 11px; line-height: 16px; letter-spacing: .28px; white-space: nowrap; }
.status i, .nav, .modes { border-left: 1px solid #bdbdbd; display: flex; align-items: center; }
.nav { padding-left: 8px; }
.modes { padding-left: 8px; }

.desk { flex: 1; padding: 5px 26px 0; background: radial-gradient(ellipse at 60px 14px, #77716d, transparent 30px), radial-gradient(ellipse at 5px 20px, #5e5a5b, transparent 50px), linear-gradient(90deg, #302d30, #17191c 20%, #1a1f27 45%, #222832 70%, #10141d 95%, #272b35); }
.dock { height: 44px; width: 1388px; border-radius: 4px 4px 0 0; padding-left: 3px; display: flex; background: linear-gradient(90deg, #777178, #72717d 25%, #6a6b78 55%, #777991 72%, #5b5e71 85%, #6b6b7c); }
.dock svg { width: 35.050px; height: 44px; }
.dsep { width: 1px; height: 32px; margin: 6px 7px 0 7px; background: #474959; flex: none; }
.cal-m { font: 6.500px "Liberation Sans", sans-serif; fill: #fff; }
.cal-d { font: 15px "Liberation Sans", sans-serif; fill: #333; }
.subl { font: bold 18px "Liberation Sans", sans-serif; fill: #f79a2a; }
.subs { font: bold 9px "Liberation Sans", sans-serif; fill: #f79a2a; }
.term { font: bold 7px "Liberation Mono", monospace; fill: #eee; }
.office { font: bold 33px "Liberation Sans", sans-serif; }
.office.w { fill: #1384cb; }
.office.p { fill: #ee4623; }
.dict { font: 5.500px "Liberation Serif", serif; fill: #d3e4f5; }
.skype { font: bold 22px "Liberation Sans", sans-serif; fill: #fff; }
.pdf { font: 5px "Liberation Sans", sans-serif; fill: #888; }
```
FILE: treemap.js
```js
// Each split lists [size, child] pairs; a cell is a "LABEL colour" string.
const right = (...kids) => ({ dir: '', kids });
const down = (...kids) => ({ dir: 'down', kids });

const STRONG = ['PSYC', 'EDUC', 'JOUR', 'MGMT'];
const LOW = ['EDUC', 'PSCI', 'CHEN', 'ECEN', 'ENVS', 'APPM', 'PHYS', 'EMEN'];

const tree = right(
  [195, down([173, 'PSYC 3b8200'], [158, 'EDUC 478b18'], [137, 'JOUR 549a37'], [118, 'MGMT 63a54e'])],
  [168, down([127, 'MCEN 69ab59'], [127, 'FNCE 69ab59'], [123, 'SOCY 6aac5a'], [120, 'PSCI 6cae5b'], [88, 'HIST 87c565'])],
  [148, down([95, 'ENVD 89c765'], [92, 'CHEN 8ac866'], [83, 'CVEN 92cd69'], [83, 'MUSC 92cd69'], [79, 'MKTG 95cf6b'], [80, 'ECEN 97d16c'], [71, 'ACCT 9ad36e'])],
  [444, down(
    [138, right([77, 'IPHY 9dd470'], [77, 'CSCI 9dd470'], [72, 'ECON 9fd571'], [72, 'MCDB 9fd571'], [73, 'MATH 9fd571'], [68, 'PHIL a1d673'])],
    [109, right([80, 'SLHS a6d975'], [75, 'ARTS a8da78'], [75, 'SPAN a8da78'], [70, 'THTR a8da78'], [69, 'ANTH a9db79'], [70, 'AREN a9db79'])],
    [340, right(
      [96, down([74, 'CHEM abdc7a'], [73, 'ENGL abdc7a'], [67, 'NRSC b0de80'], [61, 'CLAS b5e086'], [61, 'GEOG b5e086'])],
      [97, down([60, 'IAFS b6df86'], [60, 'COMM b6df86'], [54, 'ESBM b9e188'], [53, 'ATLS b9e188'], [54, 'APPM b9e188'], [54, 'PHYS b9e188'])],
      [249, down(
        [93, right([50, 'FILM bfe38d'], [51, 'ASEN bfe38d'], [50, 'ARTH bfe38d'], [50, 'EBIO bfe38d'], [44, 'CESR c1e391'])],
        [246, right(
          [74, down([55, 'ETHN c2e492'], [54, 'REAL c2e492'], [47, 'ENVS c4e494'], [47, 'EMEN c4e494'], [39, 'WMST c8e59b'])],
          [174, down(
            [64, right([45, 'MUEL cae59e'], [45, 'HUMN cae59e'], [45, 'DNCE cae59e'], [36, 'GEOL cae59e'])],
            [61, right([38, 'NAVR cee6a3'], [38, 'ATOC cee6a3'], [38, 'LING cee6a3'], [28, ' d2e7a7'], [28, ' d2e7a7'])],
            [119, right(
              [59, down([29, 'PMUS d3e7a8'], [29, 'INVS d3e7a8'], [29, 'BSLW d3e7a8'], [29, 'INBU d3e7a8'])],
              [114, down(
                [41, right([28, ' d6e8ac'], [28, ' d6e8ac'], [27, ' d6e8ac'], [28, ' d6e8ac'])],
                [77, right(
                  [38, down([30, 'ITAL d7e8ae'], [30, 'MILR d7e8ae'], [15, ' dbe8b3'])],
                  [75, down(
                    [30, right([18, ' dbe8b3'], [18, ' dbe8b3'], [18, ' dbe8b3'], [18, ' dbe8b3'])],
                    [22, right([24, ' dbe8b3'], [25, ' dbe8b3'], [24, ' dbe8b3'])],
                    [23, right([24, ' dbe8b3'], [25, ' dbe8b3'], [24, ' dbe8b3'])]
                  )]
                )]
              )]
            )]
          )]
        )]
      )]
    )]
  )]
);

function build(node, size) {
  const el = document.createElement('div');
  el.style.flexGrow = size;
  if (typeof node === 'string') {
    const [label, colour] = node.split(' ');
    el.className = 'cell' + (STRONG.includes(label) ? ' strong' : '') + (LOW.includes(label) ? ' low' : '');
    el.textContent = label;
    el.style.background = '#' + colour;
  } else {
    el.className = 'split ' + node.dir;
    node.kids.forEach(([s, child]) => el.append(build(child, s)));
  }
  return el;
}
document.getElementById('treemap').append(build(tree, 1));
```
